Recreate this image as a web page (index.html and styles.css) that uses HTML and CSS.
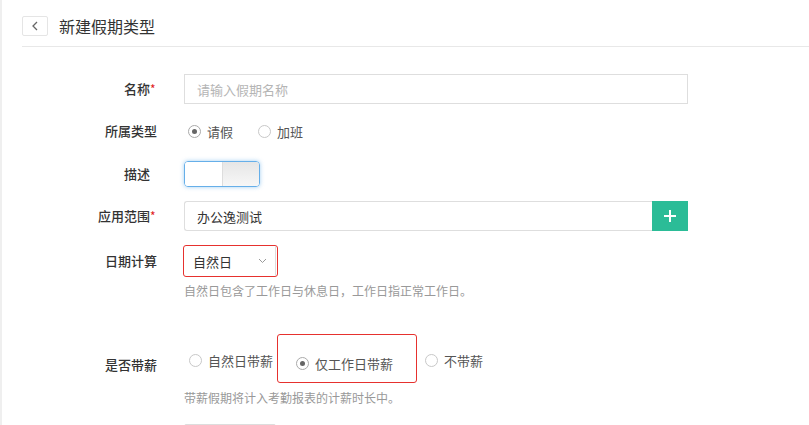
FILE: index.html
```html
<!DOCTYPE html>
<html lang="zh-CN">
<head>
    <meta charset="UTF-8">
    <meta name="viewport" content="width=device-width, initial-scale=1.0">
    <title>新建假期类型</title>
    <link rel="stylesheet" href="styles.css">
</head>
<body>
    <div class="side-strip"></div>

    <div class="main">
        <div class="page-header">
            <a class="back-btn" href="#">
                <svg width="8" height="10" viewBox="0 0 8 10"><path d="M6 1 L2 5 L6 9" fill="none" stroke="#666" stroke-width="1.3"/></svg>
            </a>
            <h1 class="page-title">新建假期类型</h1>
        </div>

        <form class="leave-form" id="leaveForm">
            <div class="form-row row-name">
                <label class="field-label" for="leaveName">名称<span class="req">*</span></label>
                <input class="text-input name-input" type="text" id="leaveName" placeholder="请输入假期名称">
            </div>

            <div class="form-row row-type">
                <span class="field-label">所属类型</span>
                <div class="radio-group">
                    <label class="radio"><span class="radio-dot checked"></span>请假</label>
                    <label class="radio"><span class="radio-dot"></span>加班</label>
                </div>
            </div>

            <div class="form-row row-desc">
                <span class="field-label">描述<span class="req hidden">*</span></span>
                <div class="switch">
                    <span class="switch-on"></span>
                    <span class="switch-off"></span>
                </div>
            </div>

            <div class="form-row row-scope">
                <label class="field-label" for="scope">应用范围<span class="req">*</span></label>
                <div class="scope-group">
                    <input class="text-input scope-input" type="text" id="scope" value="办公逸测试">
                    <button class="add-btn" type="button">
                        <svg width="12" height="12" viewBox="0 0 12 12"><path d="M6 0 V12 M0 6 H12" stroke="#fff" stroke-width="2"/></svg>
                    </button>
                </div>
            </div>

            <div class="form-row row-date">
                <span class="field-label">日期计算</span>
                <div class="mark-box date-mark">
                    <div class="select">
                        <span>自然日</span>
                        <svg width="9" height="6" viewBox="0 0 9 6"><path d="M1 1 L4.5 4.5 L8 1" fill="none" stroke="#999" stroke-width="1"/></svg>
                    </div>
                </div>
            </div>
            <p class="hint hint-date">自然日包含了工作日与休息日，工作日指正常工作日。</p>

            <div class="form-row row-salary">
                <span class="field-label">是否带薪</span>
                <div class="salary-options">
                    <label class="radio"><span class="radio-dot"></span>自然日带薪</label>
                    <div class="mark-box salary-mark">
                        <label class="radio"><span class="radio-dot checked"></span>仅工作日带薪</label>
                    </div>
                    <label class="radio"><span class="radio-dot"></span>不带薪</label>
                </div>
            </div>
            <p class="hint hint-salary">带薪假期将计入考勤报表的计薪时长中。</p>

            <div class="next-box"></div>
        </form>
    </div>
</body>
</html>
```

FILE: styles.css
```css
html, body {
    margin: 0;
    padding: 0;
    height: 100%;
    overflow: hidden;
}

body {
    font-family: "Noto Sans CJK SC", "Liberation Sans", sans-serif;
    font-size: 13px;
    color: #333;
    background-color: #fff;
    display: flex;
}

.side-strip {
    width: 2px;
    flex-shrink: 0;
    background-color: #efefef;
}

.main {
    flex: 1;
    padding-left: 20px;
}

/* en-tête */
.page-header {
    display: flex;
    align-items: center;
    height: 20px;
    padding: 16px 0 10px;
    border-bottom: 1px solid #e8e8e8;
}

.back-btn {
    width: 26px;
    height: 20px;
    box-sizing: border-box;
    border: 1px solid #e5e5e5;
    border-radius: 2px;
    display: flex;
    align-items: center;
    justify-content: center;
}

.page-title {
    margin: 0 0 0 11px;
    font-size: 16px;
    font-weight: normal;
    line-height: 20px;
    color: #333;
}

/* formulaire */
.leave-form {
    padding-top: 27px;
}

.form-row {
    display: flex;
    align-items: center;
}

.field-label {
    width: 135px;
    margin-right: 27px;
    flex-shrink: 0;
    text-align: right;
    font-weight: 500;
    color: #333;
    line-height: 18px;
}

.req {
    display: inline-block;
    width: 7px;
    padding-top: 2px;
    color: #e02020;
    font-size: 12px;
    font-weight: normal;
    vertical-align: top;
    line-height: 14px;
    text-align: left;
}

.req.hidden {
    visibility: hidden;
}

.row-name {
    height: 30px;
    margin-bottom: 14px;
}

.row-type {
    height: 26px;
    margin-bottom: 17px;
}

.row-desc {
    height: 26px;
    margin-bottom: 14px;
}

.row-scope {
    height: 30px;
    margin-bottom: 14px;
}

.row-date {
    height: 32px;
}

.text-input {
    height: 30px;
    box-sizing: border-box;
    border: 1px solid #dedede;
    padding: 0 12px;
    font-family: inherit;
    font-size: 13px;
    color: #333;
    outline: none;
}

.text-input::placeholder {
    color: #b5b5b5;
}

.name-input {
    width: 504px;
}

/* boutons radio */
.radio-group {
    display: flex;
    padding-left: 4px;
}

.radio {
    display: inline-flex;
    align-items: center;
    height: 18px;
    color: #555;
    white-space: nowrap;
}

.radio-group .radio {
    margin-right: 25px;
}

.radio-dot {
    width: 13px;
    height: 13px;
    box-sizing: border-box;
    border: 1px solid #c8c8c8;
    border-radius: 50%;
    margin-right: 6px;
    display: flex;
    align-items: center;
    justify-content: center;
}

.radio-dot.checked {
    border-color: #aaa;
}

.radio-dot.checked::after {
    content: "";
    width: 5px;
    height: 5px;
    border-radius: 50%;
    background-color: #666;
}

/* interrupteur */
.switch {
    width: 76px;
    height: 26px;
    box-sizing: border-box;
    border: 1px solid #66afe9;
    border-radius: 4px;
    box-shadow: 0 0 4px rgba(102, 175, 233, 0.6);
    display: flex;
    overflow: hidden;
}

.switch-on {
    width: 37px;
    background-color: #fff;
}

.switch-off {
    flex: 1;
    border-left: 1px solid #ddd;
    background: linear-gradient(#e6e6e6, #f7f7f7);
}

/* champ d'application */
.scope-group {
    display: flex;
}

.scope-input {
    width: 468px;
    border-right: none;
    border-radius: 3px 0 0 3px;
}

.add-btn {
    width: 36px;
    height: 30px;
    border: none;
    padding: 0;
    background-color: #2bbc97;
    display: flex;
    align-items: center;
    justify-content: center;
    cursor: pointer;
}

/* cadres rouges */
.mark-box {
    box-sizing: border-box;
    border: 1px solid #e6312e;
    border-radius: 3px;
}

.date-mark {
    width: 95px;
    height: 32px;
    margin-left: -1px;
}

.select {
    width: 92px;
    height: 30px;
    box-sizing: border-box;
    border-right: 1px solid #ddd;
    padding: 0 8px 0 9px;
    display: flex;
    align-items: center;
    justify-content: space-between;
    color: #333;
}

.hint {
    margin: 6px 0 0 162px;
    font-size: 12px;
    line-height: 16px;
    color: #999;
}

.row-salary {
    height: 49px;
    margin-top: 35px;
    align-items: flex-start;
}

.row-salary .field-label {
    padding-top: 22px;
}

.salary-options {
    display: flex;
    align-items: flex-start;
    padding-left: 5px;
}

.salary-options > .radio {
    margin-top: 17px;
}

.salary-mark {
    height: 49px;
    padding: 16px 23px 0 18px;
    margin: 0 8px 0 4px;
}

.hint-salary {
    margin-top: 7px;
}

.next-box {
    width: 90px;
    height: 30px;
    margin: 18px 0 0 162px;
    border: 1px solid #ddd;
    border-radius: 2px;
}
```
